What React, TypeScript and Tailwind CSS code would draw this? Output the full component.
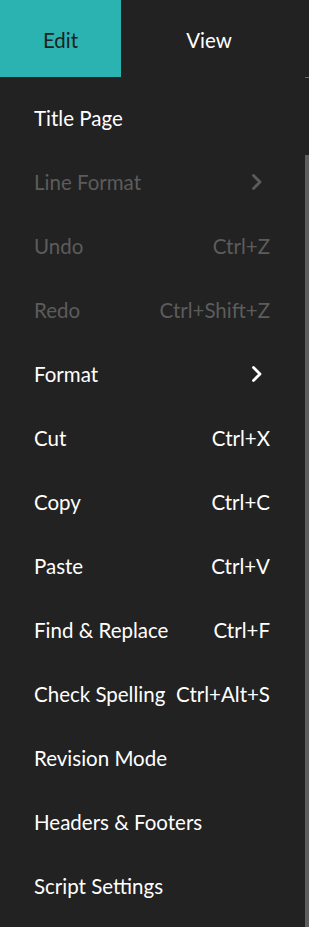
import React from 'react';

type Item = {
  label: string;
  shortcut?: string;
  submenu?: boolean;
  disabled?: boolean;
};

const items: Item[] = [
  { label: 'Title Page' },
  { label: 'Line Format', submenu: true, disabled: true },
  { label: 'Undo', shortcut: 'Ctrl+Z', disabled: true },
  { label: 'Redo', shortcut: 'Ctrl+Shift+Z', disabled: true },
  { label: 'Format', submenu: true },
  { label: 'Cut', shortcut: 'Ctrl+X' },
  { label: 'Copy', shortcut: 'Ctrl+C' },
  { label: 'Paste', shortcut: 'Ctrl+V' },
  { label: 'Find & Replace', shortcut: 'Ctrl+F' },
  { label: 'Check Spelling', shortcut: 'Ctrl+Alt+S' },
  { label: 'Revision Mode' },
  { label: 'Headers & Footers' },
  { label: 'Script Settings' },
];

const Chevron = ({ color }: { color: string }) => (
  <svg width="14" height="20" viewBox="0 0 14 20" fill="none">
    <path d="M3.5 3.5l6.5 6.5-6.5 6.5" stroke={color} strokeWidth="2.8" strokeLinecap="round" strokeLinejoin="round" />
  </svg>
);

const App = () => {
  return (
    <div
      className="w-[309px] h-[927px] overflow-hidden bg-[#222222] text-white"
      style={{ fontFamily: 'Lato, "Open Sans", sans-serif' }}
    >
      <div className="flex h-[77px]">
        <div className="w-[121px] bg-[#2bb3b1] text-[#202020] flex items-center justify-center pt-[3px] text-[20.5px]">
          Edit
        </div>
        <div className="w-[176px] flex items-center justify-center pt-[3px] text-[20.5px] text-white">View</div>
        <div className="flex-1" />
      </div>

      <div className="flex h-[850px]">
        <ul className="flex-1 pt-[9px]">
          {items.map((item, i) => (
            <li
              key={i}
              className={`h-[64px] flex items-center justify-between pl-[34px] pr-[35px] text-[20.5px] ${
                item.disabled ? 'text-[#5c5c5c]' : 'text-white'
              }`}
            >
              <span>{item.label}</span>
              {item.shortcut && <span>{item.shortcut}</span>}
              {item.submenu && (
                <span className="mr-[6px] flex items-center">
                  <Chevron color={item.disabled ? '#5c5c5c' : '#ffffff'} />
                </span>
              )}
            </li>
          ))}
        </ul>
        <div className="w-[4px] flex flex-col">
          <div className="h-px bg-[#6a6a6a]" />
          <div className="h-[77px]" />
          <div className="flex-1 bg-[#5e5e5e]" />
        </div>
      </div>
    </div>
  );
};

export default App;
